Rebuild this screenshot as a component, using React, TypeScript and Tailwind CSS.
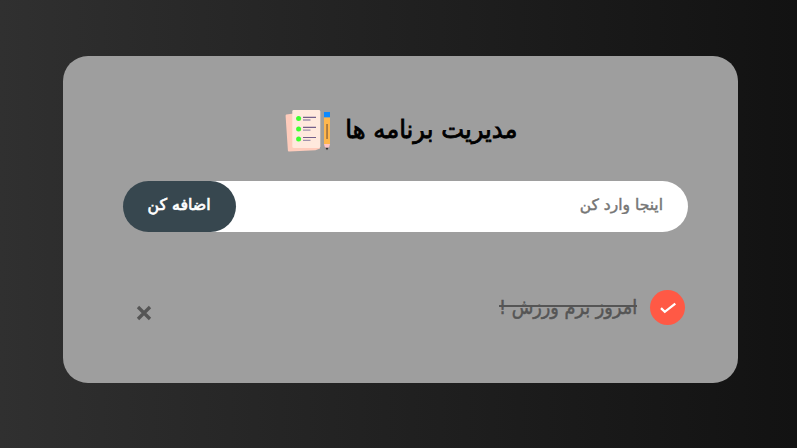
function NotesIcon() {
  return (
    <svg className="size-[46px] shrink-0" viewBox="0 0 46 46" aria-hidden="true">
      <path d="M1.3 6.4 L28 3 L35 39 V40.4 L30.5 42.2 L4 43.6 Q3 43.7 2.9 42.8 L.6 8 Q.5 6.8 1.3 6.4Z" fill="#ffccbc" />
      <rect x="7.3" y="2" width="28" height="38" rx="1.4" fill="#ffe9dd" />
      <g fill="#3dff2e">
        <circle cx="13.6" cy="10.5" r="2.5" />
        <circle cx="13.6" cy="20.9" r="2.5" />
        <circle cx="13.6" cy="31.1" r="2.5" />
      </g>
      <path d="M18 9.4h13M18 19.4h13M18 29.5h13" stroke="#74608a" strokeWidth="1.1" />
      <path d="M18 12h7.5M18 22.2h7.5M18 32.3h7.5" stroke="#a193ad" strokeWidth="1.3" />
      <path d="M39 4h6v5.5h-6z" fill="#0c8aff" />
      <path d="M39 9.5h6V36h-6z" fill="#ffb74d" />
      <path d="M41.3 16h1.5v15h-1.5z" fill="#9a6c3c" />
      <path d="M39 36h6l-.8 3-1 1h-2.4l-1-1z" fill="#ffc4c4" />
      <path d="M40.5 39.7h3L42 42.2z" fill="#2b2b2b" />
    </svg>
  );
}

export default function App() {
  return (
    <div
      dir="rtl"
      className="flex h-[448px] w-full bg-linear-to-r from-[#303030] to-[#121212] pt-14 pr-[59px] font-['DejaVu_Sans',sans-serif]"
    >
      <main className="h-[327px] w-[675px] rounded-[25px] bg-[#9e9e9e] pt-[52px] pr-[50px] pl-[60px]">
        <h1 className="flex h-[46px] items-center gap-[15px] pr-[170px] text-[25px] text-black">
          <span className="block w-[172px] shrink-0 pb-0.5 whitespace-nowrap">
            <span className="inline-block origin-right scale-x-[.97] [-webkit-text-stroke:.8px_black]">مدیریت برنامه ها</span>
          </span>
          <NotesIcon />
        </h1>
        <form className="mt-[27px] flex h-[51px]">
          <input
            className="-ml-[57px] min-w-0 flex-1 rounded-r-full bg-white pt-0.5 pr-[25px] pb-1 text-[15.5px] text-black outline-none placeholder:text-[#757575] [-webkit-text-stroke:.45px_#757575]"
            placeholder="اینجا وارد کن"
          />
          <button type="button" className="relative w-[113px] rounded-full bg-[#37474f] pb-1 text-base text-white">
            <span className="inline-block scale-x-[.985] [-webkit-text-stroke:.7px_white]">اضافه کن</span>
          </button>
        </form>
        <div className="mt-[58px] flex h-[35px] items-center pr-[3px]">
          <span className="flex size-[35px] items-center justify-center rounded-full bg-[#ff5945]">
            <svg className="size-[18px]" viewBox="0 0 18 18" fill="none" stroke="#fff" strokeWidth="2.3">
              <path d="M2 9.2 5.8 12.8 16.3 4.6" />
            </svg>
          </span>
          <span className="relative mr-[13px] w-[138px] pb-0.5 whitespace-nowrap text-[20px] text-[#555]">
            <s className="inline-block origin-right scale-x-[.885] no-underline [-webkit-text-stroke:.5px_#555]">
              امروز برم ورزش !
            </s>
            <span className="absolute inset-x-0 top-[13px] h-0.5 bg-[#555]" />
          </span>
          <button type="button" aria-label="حذف" className="mt-[10px] mr-auto ml-[13px]">
            <svg className="size-4" viewBox="0 0 16 16" stroke="#555" strokeWidth="3.3">
              <path d="m2 2 12 12M14 2 2 14" />
            </svg>
          </button>
        </div>
      </main>
    </div>
  );
}
